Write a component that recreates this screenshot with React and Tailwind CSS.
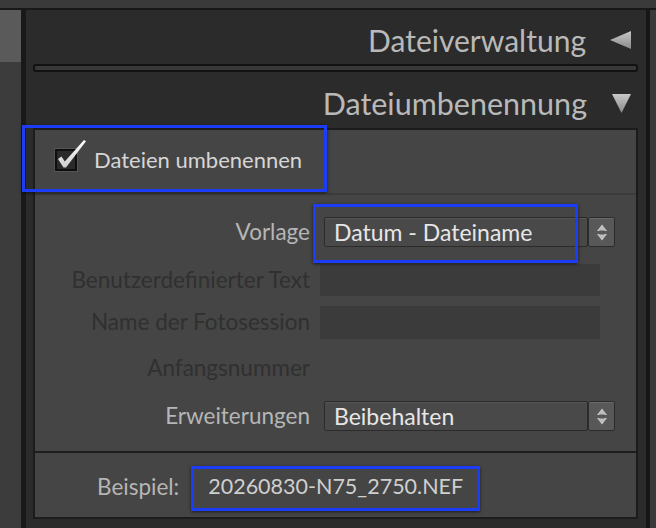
import React from "react";

function Stepper() {
  return (
    <div className="w-[27px] self-stretch bg-[#585858] border border-[#2c2c2c] rounded-[2px] flex items-center justify-center shadow-[inset_0_1px_0_#6a6a6a]">
      <svg width="12" height="19" viewBox="0 0 12 19">
        <path d="M1 8 L6 1.5 L11 8 L9 8 L6 4.5 L3 8 Z" fill="#c8c8c8" />
        <path d="M1.5 7.5 L6 3.5 L10.5 7.5 Z" fill="#bdbdbd" />
        <path d="M1 11 L3 11 L6 14.5 L9 11 L11 11 L6 17.5 Z" fill="#c8c8c8" />
        <path d="M1.5 11.5 L10.5 11.5 L6 15.5 Z" fill="#bdbdbd" />
      </svg>
    </div>
  );
}

function Select({ value }) {
  return (
    <div className="ml-[14px] w-[291px] h-[30px] flex">
      <div className="flex-1 bg-[#494949] border border-[#2b2b2b] rounded-[2px] shadow-[inset_0_1px_0_#555] flex items-center pl-[9px] text-[23px] text-[#e6e6e6] leading-none">
        {value}
      </div>
      <Stepper />
    </div>
  );
}

function Label({ children, dim }) {
  return (
    <div
      className={
        "w-[275px] shrink-0 text-right text-[22.5px] leading-none " +
        (dim ? "text-[#303030]" : "text-[#b6b6b6]")
      }
    >
      {children}
    </div>
  );
}

export default function App() {
  return (
    <div className="w-[656px] h-[528px] bg-[#2b2b2b] flex flex-col overflow-hidden relative font-['Lato',sans-serif]">
      <div className="h-[10px] shrink-0 bg-[#3a3a3a] border-b-2 border-[#181818]" />
      <div className="flex flex-1 min-h-0">
        <div className="w-[21px] flex flex-col">
          <div className="h-[52px] bg-[#5a5a5a]" />
          <div className="flex-1 bg-[#3c3c3c]" />
        </div>
        <div className="w-[5px] bg-[#191919]" />
        <div className="flex-1 flex flex-col pl-[7px] pr-[8px] bg-[#2b2b2b]">
          {/* Header 1 */}
          <div className="h-[54px] shrink-0 flex items-center justify-end pt-[6px] pr-[7px] gap-[24px]">
            <span className="text-[30px] leading-none text-[#b9b9b9]">Dateiverwaltung</span>
            <svg width="21" height="18" viewBox="0 0 21 18">
              <defs>
                <linearGradient id="g1" x1="0" y1="0" x2="0" y2="1">
                  <stop offset="0" stopColor="#c8c8c8" />
                  <stop offset="1" stopColor="#8a8a8a" />
                </linearGradient>
              </defs>
              <polygon points="21,0 21,18 0,9" fill="url(#g1)" />
            </svg>
          </div>
          {/* groove */}
          <div className="h-[8px] shrink-0 rounded-[3px] border-2 border-[#121212] bg-[#383838]" />
          {/* Header 2 */}
          <div className="h-[56px] shrink-0 flex items-center justify-end pt-[6px] pr-[7px] gap-[25px]">
            <span className="text-[30.5px] leading-none text-[#b9b9b9]">Dateiumbenennung</span>
            <svg width="19" height="19" viewBox="0 0 19 19">
              <defs>
                <linearGradient id="g2" x1="0" y1="0" x2="0" y2="1">
                  <stop offset="0" stopColor="#c8c8c8" />
                  <stop offset="1" stopColor="#8a8a8a" />
                </linearGradient>
              </defs>
              <polygon points="0,0 19,0 9.5,19" fill="url(#g2)" />
            </svg>
          </div>
          {/* Panel */}
          <div className="flex-1 mb-[9px] border-2 border-[#1c1c1c] bg-[#454545] flex flex-col">
            {/* checkbox row */}
            <div className="h-[63px] shrink-0 flex items-center pl-[20px] pb-[4px] gap-[17px]">
              <div className="relative w-[22px] h-[22px] bg-[#2a2a2a] border-2 border-[#0e0e0e] shadow-[0_0_0_1px_#555]">
                <svg className="absolute left-[-2px] top-[-12px]" width="34" height="30" viewBox="0 0 34 30">
                  <defs>
                    <linearGradient id="gc" x1="0" y1="0" x2="0" y2="1">
                      <stop offset="0" stopColor="#ffffff" />
                      <stop offset="1" stopColor="#cfcfcf" />
                    </linearGradient>
                  </defs>
                  <path d="M3 20 L6.5 17.5 L9.8 22.5 L29 1 L31 2.2 L11 28.5 L8.5 28.5 Z" fill="url(#gc)" />
                </svg>
              </div>
              <span className="text-[22px] leading-none text-[#d6d6d6]">Dateien umbenennen</span>
            </div>
            {/* options */}
            <div className="shrink-0 border-t-2 border-[#3b3b3b] flex flex-col pb-[20px]">
              <div className="mt-[22px] h-[30px] flex items-center">
                <Label>Vorlage</Label>
                <Select value="Datum - Dateiname" />
              </div>
              <div className="mt-[17px] h-[32px] flex items-center">
                <Label dim>Benutzerdefinierter Text</Label>
                <div className="ml-[10px] w-[280px] h-full bg-[#3b3b3b]" />
              </div>
              <div className="mt-[10px] h-[33px] flex items-center">
                <Label dim>Name der Fotosession</Label>
                <div className="ml-[10px] w-[280px] h-full bg-[#3b3b3b]" />
              </div>
              <div className="mt-[13px] h-[32px] flex items-center">
                <Label dim>Anfangsnummer</Label>
              </div>
              <div className="mt-[17px] h-[30px] flex items-center">
                <Label>Erweiterungen</Label>
                <Select value="Beibehalten" />
              </div>
            </div>
            {/* example */}
            <div className="flex-1 border-t-2 border-[#1e1e1e] flex items-center pt-[4px] pl-[62px]">
              <span className="text-[22.5px] leading-none text-[#b6b6b6]">Beispiel:</span>
              <span className="ml-[29px] text-[21.5px] leading-none text-[#cfcfcf]">20260830-N75_2750.NEF</span>
            </div>
          </div>
        </div>
        <div className="w-[4px] bg-[#161616]" />
        <div className="w-[6px] bg-[#3a3a3a]" />
      </div>

      {/* annotation boxes */}
      <div className="absolute left-[22px] top-[125px] w-[305px] h-[67px] border-[3px] border-[#1d3cf6] shadow-[0_1px_3px_rgba(0,0,0,0.6)]" />
      <div className="absolute left-[313px] top-[204px] w-[265px] h-[59px] border-[3px] border-[#1d3cf6] shadow-[0_1px_3px_rgba(0,0,0,0.6)]" />
      <div className="absolute left-[191px] top-[466px] w-[289px] h-[45px] border-[3px] border-[#1d3cf6] shadow-[0_1px_3px_rgba(0,0,0,0.6)]" />
    </div>
  );
}
